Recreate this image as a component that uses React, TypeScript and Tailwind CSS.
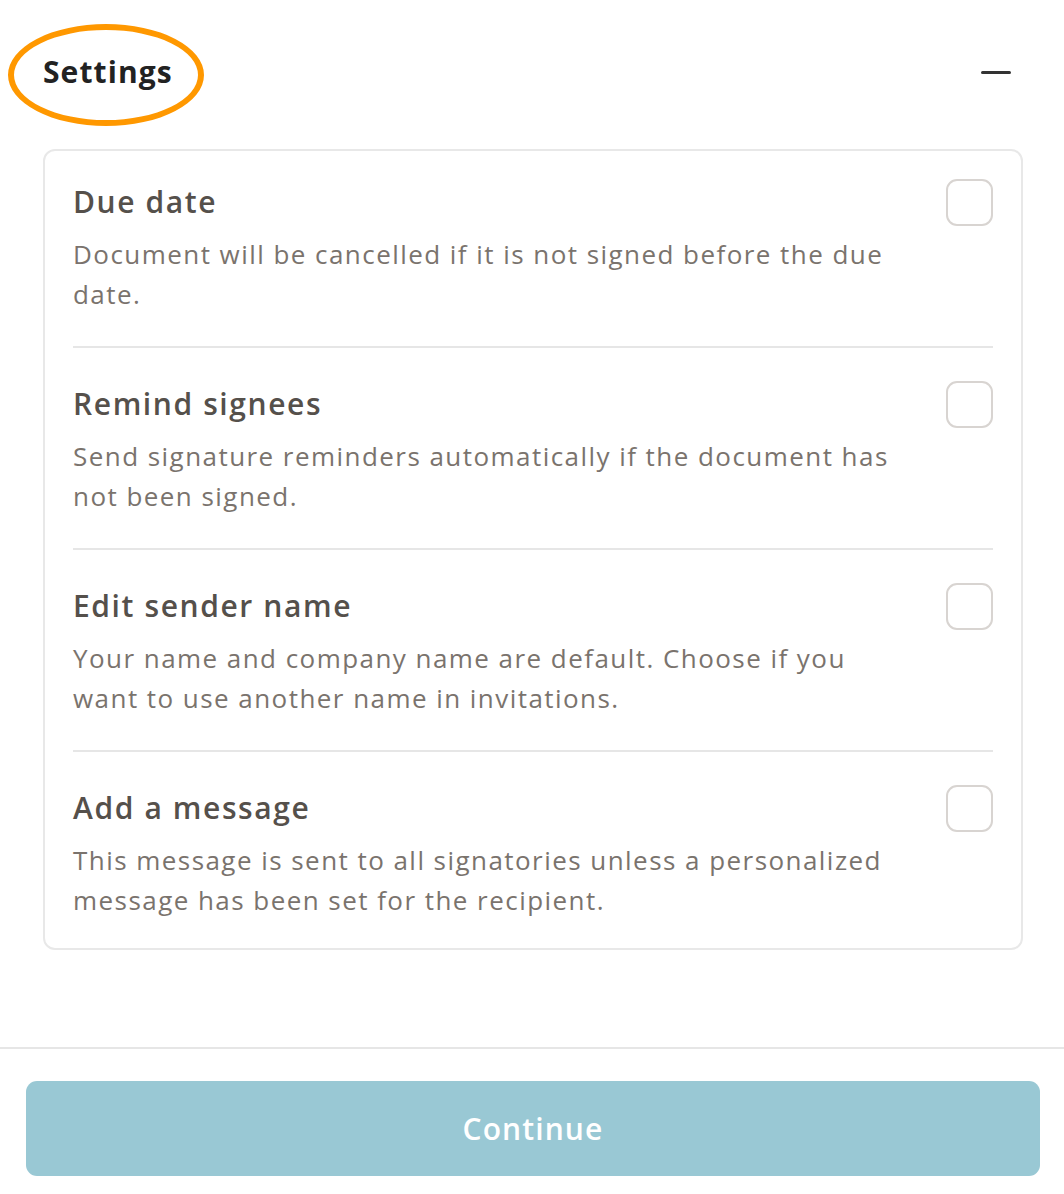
import React from "react";

const items = [
  {
    title: "Due date",
    desc: "Document will be cancelled if it is not signed before the due date.",
  },
  {
    title: "Remind signees",
    desc: "Send signature reminders automatically if the document has not been signed.",
  },
  {
    title: "Edit sender name",
    desc: "Your name and company name are default. Choose if you want to use another name in invitations.",
  },
  {
    title: "Add a message",
    desc: "This message is sent to all signatories unless a personalized message has been set for the recipient.",
  },
];

export default function App() {
  return (
    <div
      className="w-[1064px] h-[1194px] bg-white flex flex-col overflow-hidden"
      style={{ fontFamily: "'Open Sans', 'Noto Sans', sans-serif" }}
    >
      <div className="flex-1 px-[43px]">
        <div className="h-[149px] flex items-start justify-between">
          <div className="relative mt-[54px]">
            <span className="text-[30px] leading-[36px] font-bold text-[#222222] tracking-[1.1px]">
              Settings
            </span>
            <div className="absolute left-[-35px] top-[-30px] w-[196px] h-[102px] rounded-[50%] border-[6px] border-[#ff9800]" />
          </div>
          <div className="mt-[71px] mr-[10px] w-[30px] h-[3px] bg-[#333333] rounded-full" />
        </div>
        <div className="w-[980px] border-2 border-[#e8e8e8] rounded-[12px] pl-[28px] pr-[28px] pt-[31px] pb-[28px]">
          {items.map((it, i) => (
            <div
              key={it.title}
              className={
                "flex items-start justify-between " +
                (i < items.length - 1
                  ? "border-b-2 border-[#e6e6e6] pb-[32px] mb-[36px]"
                  : "")
              }
            >
              <div className="w-[832px]">
                <div className="text-[30px] leading-[40px] font-semibold text-[#55504b] tracking-[1.6px]">
                  {it.title}
                </div>
                <div className="mt-[12px] text-[26px] leading-[40px] text-[#7a736d] tracking-[1.45px]">
                  {it.desc}
                </div>
              </div>
              <div className="mt-[-3px] w-[47px] h-[47px] rounded-[11px] border-2 border-[#d8d4d1] bg-white shrink-0" />
            </div>
          ))}
        </div>
      </div>
      <div className="border-t-2 border-[#e6e6e6] pl-[26px] pr-[24px] pt-[32px] pb-[18px]">
        <button className="w-full h-[95px] rounded-[11px] bg-[#99c8d4] text-white text-[30px] font-semibold tracking-[1.1px]">
          Continue
        </button>
      </div>
    </div>
  );
}
